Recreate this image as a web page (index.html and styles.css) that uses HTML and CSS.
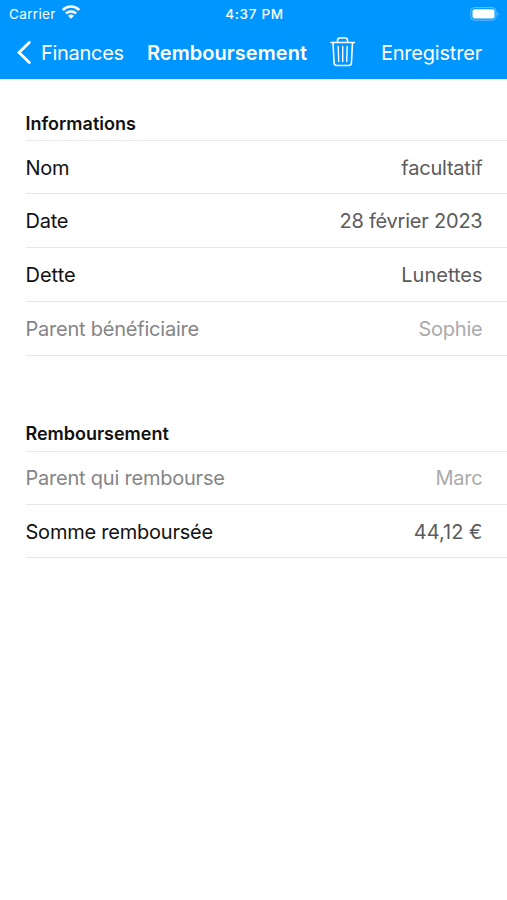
FILE: index.html
```html
<!DOCTYPE html>
<html lang="fr">
<head>
<meta charset="utf-8">
<title>Remboursement</title>
<link rel="stylesheet" href="styles.css">
</head>
<body>
<header class="top">
  <div class="status">
    <div class="carrier"><span>Carrier</span>
      <svg class="wifi" width="18" height="14" viewBox="0 0 18 14" fill="none" stroke="#fff" stroke-width="2.500"><path d="M.8 5C5.400.4 12.600.4 17.200 5M3.900 8.400C6.700 5.700 11.300 5.700 14.100 8.400"/><path d="M9 13.800L6 10.700Q9 8.300 12 10.700Z" fill="#fff" stroke="none"/></svg>
    </div>
    <div class="time">4:37 PM</div>
    <div class="battery"><svg width="30" height="14" viewBox="0 0 30 14"><rect x=".8" y=".6" width="25.200" height="12.600" rx="3.600" fill="none" stroke="#fff" stroke-opacity=".4"/><rect x="2.500" y="2.300" width="22" height="9.200" rx="2" fill="#fff"/><path d="M27.400 4.900Q29.600 6.900 27.400 8.900Z" fill="#fff" fill-opacity=".45"/></svg></div>
  </div>
  <nav class="nav">
    <svg class="back" width="16" height="26" viewBox="0 0 16 26" fill="none" stroke="#fff" stroke-width="2.800" stroke-linecap="round"><path d="M13.300 2.500L3 12.500L13.300 22.500"/></svg>
    <span class="parent">Finances</span>
    <h1 class="title">Remboursement</h1>
    <svg class="trash" width="26" height="32" viewBox="0 0 26 32" fill="none" stroke="#fff" stroke-width="1.600" stroke-linecap="round" stroke-linejoin="round"><path d="M1 6.500H24.500M7.500 6.500V4.300Q7.500 2 9.800 2H15.200Q17.500 2 17.500 4.300V6.500M3 6.500L4.100 27Q4.300 29.500 6.800 29.500H18.700Q21.200 29.500 21.400 27L22.500 6.500"/><path stroke-width="1.400" d="M8.200 10.500L8.700 25.500M12.700 10.500V25.500M17.200 10.500L16.700 25.500"/></svg>
    <span class="save">Enregistrer</span>
  </nav>
</header>
<main>
  <section class="group">
    <h2>Informations</h2>
    <div class="row"><span>Nom</span><span class="value">facultatif</span></div>
    <div class="row"><span>Date</span><span class="value">28 février 2023</span></div>
    <div class="row"><span class="debt">Dette</span><span class="value debt">Lunettes</span></div>
    <div class="row disabled"><span>Parent bénéficiaire</span><span class="value">Sophie</span></div>
  </section>
  <section class="group">
    <h2>Remboursement</h2>
    <div class="row disabled"><span>Parent qui rembourse</span><span class="value">Marc</span></div>
    <div class="row"><span>Somme remboursée</span><span class="value amount">44,12 €</span></div>
  </section>
</main>
</body>
</html>
```
FILE: styles.css
```css
*{box-sizing:border-box}
body{margin:0;background:#fff;color:#111;font-family:Inter,"Liberation Sans",sans-serif;font-size:20px;letter-spacing:-.22px}
h1,h2{margin:0}
.top{height:79px;background:#0096ff;color:#fff}
.status{height:27px;display:grid;grid-template-columns:1fr auto 1fr;align-items:center;font-size:13.500px;letter-spacing:.35px;padding:0 7px 0 9px}
.carrier{display:flex;align-items:center;gap:6.500px}
.wifi{margin-top:-3px}
.time{font-weight:500;letter-spacing:.7px}
.battery{display:flex;justify-content:flex-end}
.nav{height:52px;display:flex;align-items:center;padding:0 25px 0 16px}
.parent{margin-left:9px;width:106px;letter-spacing:-.3px}
.title{font-size:20px;font-weight:600;letter-spacing:.05px;width:183px}
.trash{margin-top:-2px}
.save{margin-left:auto;letter-spacing:-.2px}
.group{padding-left:25.500px}
.group + .group{margin-top:56px}
h2{height:61px;padding-top:35px;font-size:18px;line-height:20px;font-weight:600;letter-spacing:0}
.group + .group h2{height:39px;padding-top:12px;letter-spacing:-.02px}
.row{height:53.500px;border-bottom:1px solid #e7e7e8;display:flex;align-items:center;justify-content:space-between;padding:2px 24.500px 0 0}
.row:first-of-type{height:54px;border-top:1px solid #e9e9ea;padding-top:1px}
.row:nth-of-type(n+3){height:54px}
.value{color:#5b5b5d}
.debt{letter-spacing:0}
.amount{letter-spacing:.05px}
.disabled{color:#858587}
.disabled .value{color:#aaa}
```
